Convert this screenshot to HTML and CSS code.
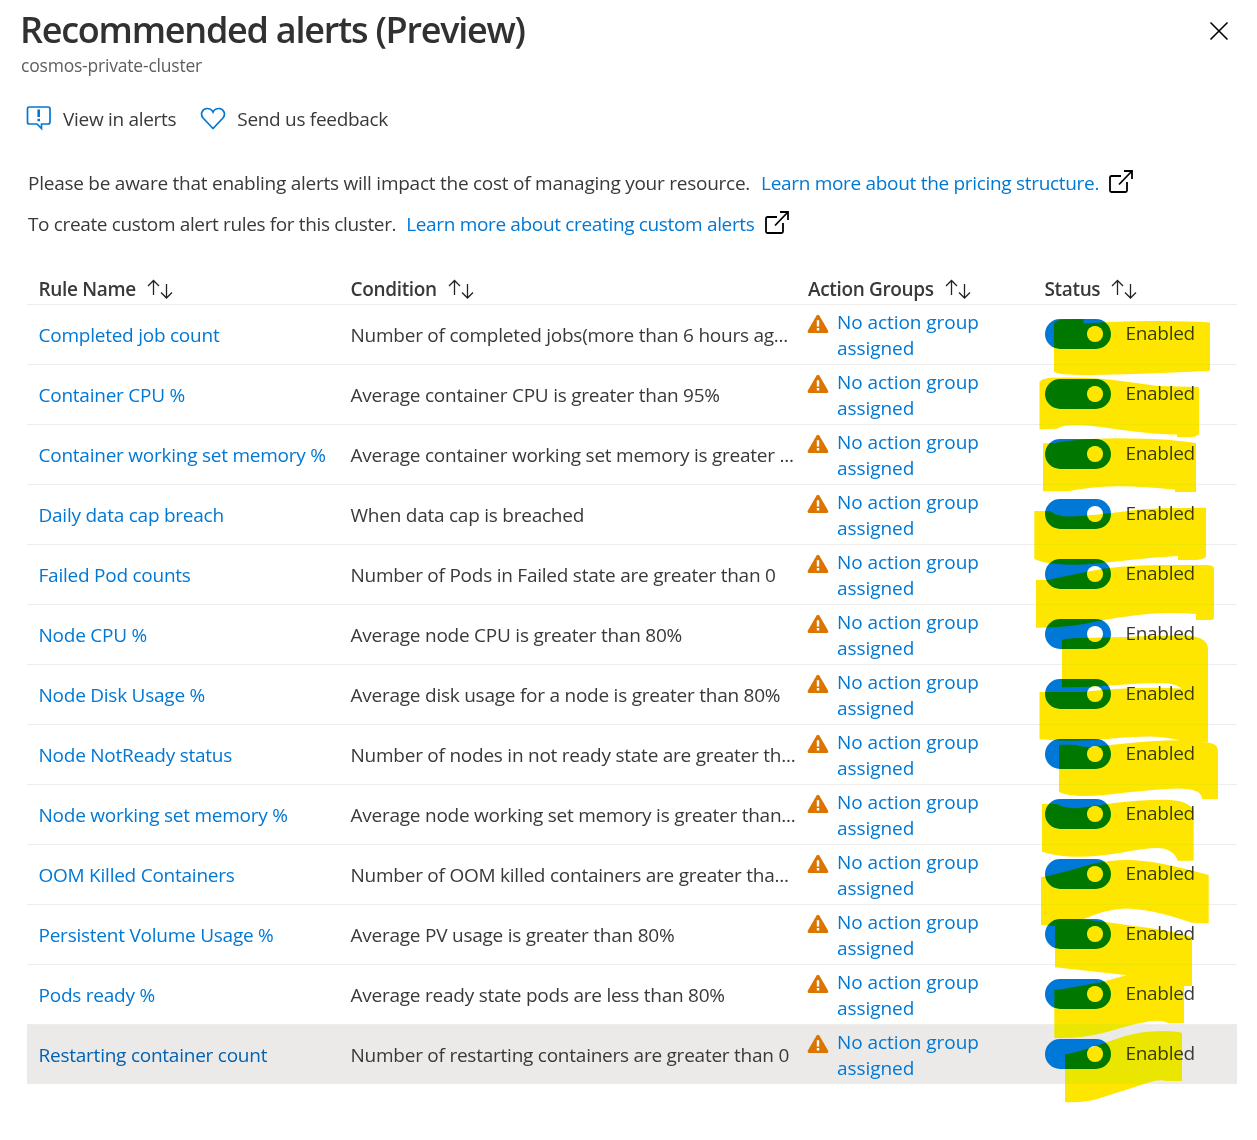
FILE: index.html
```html
<!DOCTYPE html>
<html lang="en">
<head>
<meta charset="utf-8">
<title>Recommended alerts (Preview)</title>
<link rel="stylesheet" href="styles.css">
</head>
<body>
<svg class="defs" width="0" height="0">
  <symbol id="sort" viewBox="0 0 26 20"><path d="M6.5 16V1.500M1 7l5.500-5.500L12 7M19.500 5v14M14 13.500l5.500 5.500 5.500-5.500"/></symbol>
  <symbol id="open" viewBox="0 0 26 26"><path d="M13 7H3.500Q2 7 2 8.500V21.500Q2 23 3.500 23H17.500Q19 23 19 21.500V13M11 15.500L24 2M16 2h8v8"/></symbol>
  <symbol id="warn" viewBox="0 0 22 20"><path fill="#db7500" d="M9.700 1.300Q11 0 12.200 1.300L21.300 17Q21.600 19 20 19H2Q.3 19 .6 17Z"/><path stroke="#fff" stroke-width="2.400" d="M11 6.300v6.200M11 14v2.400"/></symbol>
</svg>
<main class="panel">
  <header class="head">
    <div>
      <h1>Recommended alerts (Preview)</h1>
      <p class="sub">cosmos-private-cluster</p>
    </div>
    <svg class="close" viewBox="0 0 20 20"><path d="M1.500 1.500l17 17M18.500 1.500l-17 17"/></svg>
  </header>
  <nav class="tools">
    <svg class="tool-icon" viewBox="0 0 26 26"><path d="M3 2H22Q24 2 24 4V17Q24 19 22 19H15.500V23.500L11 19H3Q1.500 19 1.500 17V4Q1.500 2 3 2Z"/><path class="bang" d="M12.700 4.500v7.500M12.700 13.800v2.400"/></svg>
    <span class="view">View in alerts</span>
    <svg class="tool-icon heart" viewBox="0 0 26 26"><path d="M13 23.500L3.300 13.300C-.5 9 2.500 3.500 7 3.500C10 3.500 12 5 13 7C14 5 16 3.500 19 3.500C23.500 3.500 26.500 9 22.700 13.300Z"/></svg>
    <span class="send">Send us feedback</span>
  </nav>
  <section class="notes">
    <p class="pricing"><span>Please be aware that enabling alerts will impact the cost of managing your resource.</span><a>Learn more about the pricing structure.</a><svg class="open"><use href="#open"/></svg></p>
    <p class="custom"><span>To create custom alert rules for this cluster.</span><a>Learn more about creating custom alerts</a><svg class="open"><use href="#open"/></svg></p>
  </section>
  <section class="table">
    <div class="row titles"><b>Rule Name<svg class="sort"><use href="#sort"/></svg></b><b>Condition<svg class="sort"><use href="#sort"/></svg></b><b>Action Groups<svg class="sort"><use href="#sort"/></svg></b><b>Status<svg class="sort"><use href="#sort"/></svg></b></div>
    <div class="row"><a>Completed job count</a><span>Number of completed jobs(more than 6 hours ag...</span><div class="group"><svg class="warn"><use href="#warn"/></svg><a>No action group<br>assigned</a></div><div class="status"><i class="toggle"></i>Enabled</div></div>
    <div class="row"><a>Container CPU %</a><span>Average container CPU is greater than 95%</span><div class="group"><svg class="warn"><use href="#warn"/></svg><a>No action group<br>assigned</a></div><div class="status"><i class="toggle"></i>Enabled</div></div>
    <div class="row"><a>Container working set memory %</a><span>Average container working set memory is greater ...</span><div class="group"><svg class="warn"><use href="#warn"/></svg><a>No action group<br>assigned</a></div><div class="status"><i class="toggle"></i>Enabled</div></div>
    <div class="row"><a>Daily data cap breach</a><span>When data cap is breached</span><div class="group"><svg class="warn"><use href="#warn"/></svg><a>No action group<br>assigned</a></div><div class="status"><i class="toggle"></i>Enabled</div></div>
    <div class="row"><a>Failed Pod counts</a><span>Number of Pods in Failed state are greater than 0</span><div class="group"><svg class="warn"><use href="#warn"/></svg><a>No action group<br>assigned</a></div><div class="status"><i class="toggle"></i>Enabled</div></div>
    <div class="row"><a>Node CPU %</a><span>Average node CPU is greater than 80%</span><div class="group"><svg class="warn"><use href="#warn"/></svg><a>No action group<br>assigned</a></div><div class="status"><i class="toggle"></i>Enabled</div></div>
    <div class="row"><a>Node Disk Usage %</a><span>Average disk usage for a node is greater than 80%</span><div class="group"><svg class="warn"><use href="#warn"/></svg><a>No action group<br>assigned</a></div><div class="status"><i class="toggle"></i>Enabled</div></div>
    <div class="row"><a>Node NotReady status</a><span>Number of nodes in not ready state are greater th...</span><div class="group"><svg class="warn"><use href="#warn"/></svg><a>No action group<br>assigned</a></div><div class="status"><i class="toggle"></i>Enabled</div></div>
    <div class="row"><a>Node working set memory %</a><span>Average node working set memory is greater than...</span><div class="group"><svg class="warn"><use href="#warn"/></svg><a>No action group<br>assigned</a></div><div class="status"><i class="toggle"></i>Enabled</div></div>
    <div class="row"><a>OOM Killed Containers</a><span>Number of OOM killed containers are greater tha...</span><div class="group"><svg class="warn"><use href="#warn"/></svg><a>No action group<br>assigned</a></div><div class="status"><i class="toggle"></i>Enabled</div></div>
    <div class="row"><a>Persistent Volume Usage %</a><span>Average PV usage is greater than 80%</span><div class="group"><svg class="warn"><use href="#warn"/></svg><a>No action group<br>assigned</a></div><div class="status"><i class="toggle"></i>Enabled</div></div>
    <div class="row"><a>Pods ready %</a><span>Average ready state pods are less than 80%</span><div class="group"><svg class="warn"><use href="#warn"/></svg><a>No action group<br>assigned</a></div><div class="status"><i class="toggle"></i>Enabled</div></div>
    <div class="row selected"><a>Restarting container count</a><span>Number of restarting containers are greater than 0</span><div class="group"><svg class="warn"><use href="#warn"/></svg><a>No action group<br>assigned</a></div><div class="status"><i class="toggle"></i>Enabled</div></div>
  </section>
  <svg class="marker" viewBox="1030 310 200 800">
    <path d="M1054 323Q1057 319.500 1066 319.200L1083.500 319V323.500Q1120 320.500 1160 321Q1190 321 1210 322.500V370.700Q1130 374.500 1092 375Q1056 375 1054 371.500Z"/>
    <path d="M1039.500 382Q1042 378 1052 377.700Q1090 376.500 1125 381.500L1158 386L1199 387V434.500L1194 437H1177V434.500Q1150 434.500 1105 427.500Q1080 424 1065 425.700Q1060 426.500 1057 428.700L1039.500 429.300Z"/>
    <path d="M1043 443.300H1053Q1075 439 1118 438.300Q1170 438.500 1196 443.300V492H1175V489.700Q1145 486.500 1118 486.300Q1090 487 1068 491.300H1043Z"/>
    <path d="M1034.300 511H1050Q1057 516.500 1070 516.500Q1090 516 1135 510Q1155 507.500 1206 507.700V557Q1202 560 1195 560H1178V556L1152 557.700L1092 564Q1050 566.500 1034.300 559Z"/>
    <path d="M1036 580H1047L1087 571.700Q1120 564.500 1168 565H1205Q1214 565 1214 568V617Q1214 620 1211 620H1196V614Q1165 611.500 1138 615Q1120 617 1098 621Q1070 628 1036 627.700Z"/>
    <path d="M1062 640Q1065 638 1080 638L1125 637Q1155 635 1187 635.500Q1208 637 1208 649V700H1188Q1185 683.500 1163 683Q1140 683 1118 685Q1090 687.500 1062 687.300Z"/>
    <path d="M1039.500 692H1082Q1110 688.500 1148 687.700Q1170 687.700 1190 689H1208V742.300H1185Q1172 737 1150 736.500Q1130 736.500 1105 739.300Q1070 742 1039.500 739.300Z"/>
    <path d="M1059 744.700H1075Q1082 747 1088 747L1118 744.300Q1160 739.500 1188 740.300L1208 742.500Q1218 744 1218 750V799H1202Q1202 788.500 1178 788.500Q1160 788.500 1102 795.300Q1070 797.500 1059 792Z"/>
    <path d="M1042 804H1057Q1065 808.300 1078 808.300L1112 803.300Q1140 799.500 1165 799.700Q1188 800 1193.700 810V860.700H1177.700Q1173 848 1157 848Q1145 848 1120 853Q1070 861 1042 851.700Z"/>
    <path d="M1041 877.300Q1055 875 1092 864Q1108 860 1128 860Q1155 860 1208.700 875V923.300L1192 922.700Q1150 908.500 1125 908.500Q1105 909.500 1084 919L1055 926L1041 925Z"/>
    <path d="M1055 920L1078 919Q1108 922 1158 929.300Q1180 933 1192 937.300V986H1127V975.300L1055 967.300Z"/>
    <path d="M1054.300 990L1062 989.300L1102 982L1127 975H1184V1023H1168Q1160 1019 1145 1022.300Q1130 1025 1108 1031.700Q1080 1039 1054.300 1038Z"/>
    <path d="M1065 1054.300Q1080 1052 1108 1041.700Q1135 1031.500 1155 1031.200Q1175 1030.500 1182 1033V1081H1167Q1160 1079 1148 1082.700L1098 1098.700Q1085 1103 1065 1102Z"/>
  </svg>
</main>
</body>
</html>
```
FILE: styles.css
```css
* { box-sizing: border-box; }
body {
  margin: 0;
  background: #fff;
  color: #3a3938;
  font: 19px/26px "Open Sans", "Noto Sans", sans-serif;
  letter-spacing: -0.24px;
}
h1, p { margin: 0; }
svg { display: block; flex: none; fill: none; }
.defs { position: absolute; }
.panel { position: relative; height: 1140px; padding: 7px 20px 0 21px; }
.head { display: flex; justify-content: space-between; height: 95px; }
h1 { margin-left: -1px; color: #323130; font-size: 36px; line-height: 46px; font-weight: 600; letter-spacing: -1.25px; }
.sub { font-size: 17.500px; line-height: 24px; letter-spacing: -0.2px; color: #605e5c; }
.close { width: 20px; height: 20px; margin: 14px 8px 0 0; stroke: #000; stroke-width: 1.600; }
.tools { display: flex; align-items: center; height: 34px; padding-left: 5px; letter-spacing: -0.3px; }
.tool-icon { width: 26px; height: 26px; margin: -2px 11px 0 0; stroke: #0078d4; stroke-width: 1.700; }
.bang { stroke-width: 2.600; }
.heart { margin-left: 24px; }
.notes { margin-top: 26px; padding-left: 7px; }
.notes p { display: flex; align-items: center; height: 41px; }
.notes a { margin-left: 11px; }
.pricing span { letter-spacing: -0.25px; }
.pricing a { letter-spacing: -0.31px; }
.custom { letter-spacing: -0.34px; }
.custom span { letter-spacing: -0.36px; }
.custom a { margin-left: 10px; }
a { color: #0078d4; }
.open { width: 26px; height: 26px; margin: -2px 0 0 9px; stroke: #000; stroke-width: 1.800; }
.table { width: 1210px; margin: 29px 0 0 6px; }
.row {
  display: grid;
  grid-template-columns: 312px 457.500px 236.500px 1fr;
  height: 60px;
  padding-left: 11.500px;
  border-bottom: 1px solid #eeedec;
  white-space: nowrap;
}
.row > a, .row > span { line-height: 60px; }
.row.titles { height: 32px; }
.titles b { display: flex; align-items: center; height: 32px; font-weight: 600; letter-spacing: -0.34px; }
.sort { width: 26px; height: 20px; margin-left: 11px; stroke: #222; stroke-width: 1.300; }
.group { display: flex; padding-top: 4px; letter-spacing: -0.06px; }
.warn { width: 22px; height: 20px; margin: 5px 8px 0 -1px; }
.status { display: flex; align-items: center; height: 55px; letter-spacing: -0.3px; }
.toggle { width: 66px; height: 30px; margin: 2px 15px 0 0; padding: 7px 8px; border-radius: 15px; background: #0078d7; }
.toggle::after { content: ""; display: block; width: 16px; height: 16px; margin-left: auto; border-radius: 50%; background: #fff; }
.selected { height: 59px; border: 0; background: #ebeae9; }
.selected > a:first-child { color: #0062b1; }
.marker { position: absolute; left: 1030px; top: 310px; width: 200px; height: 800px; fill: #ffe600; mix-blend-mode: darken; }
```
